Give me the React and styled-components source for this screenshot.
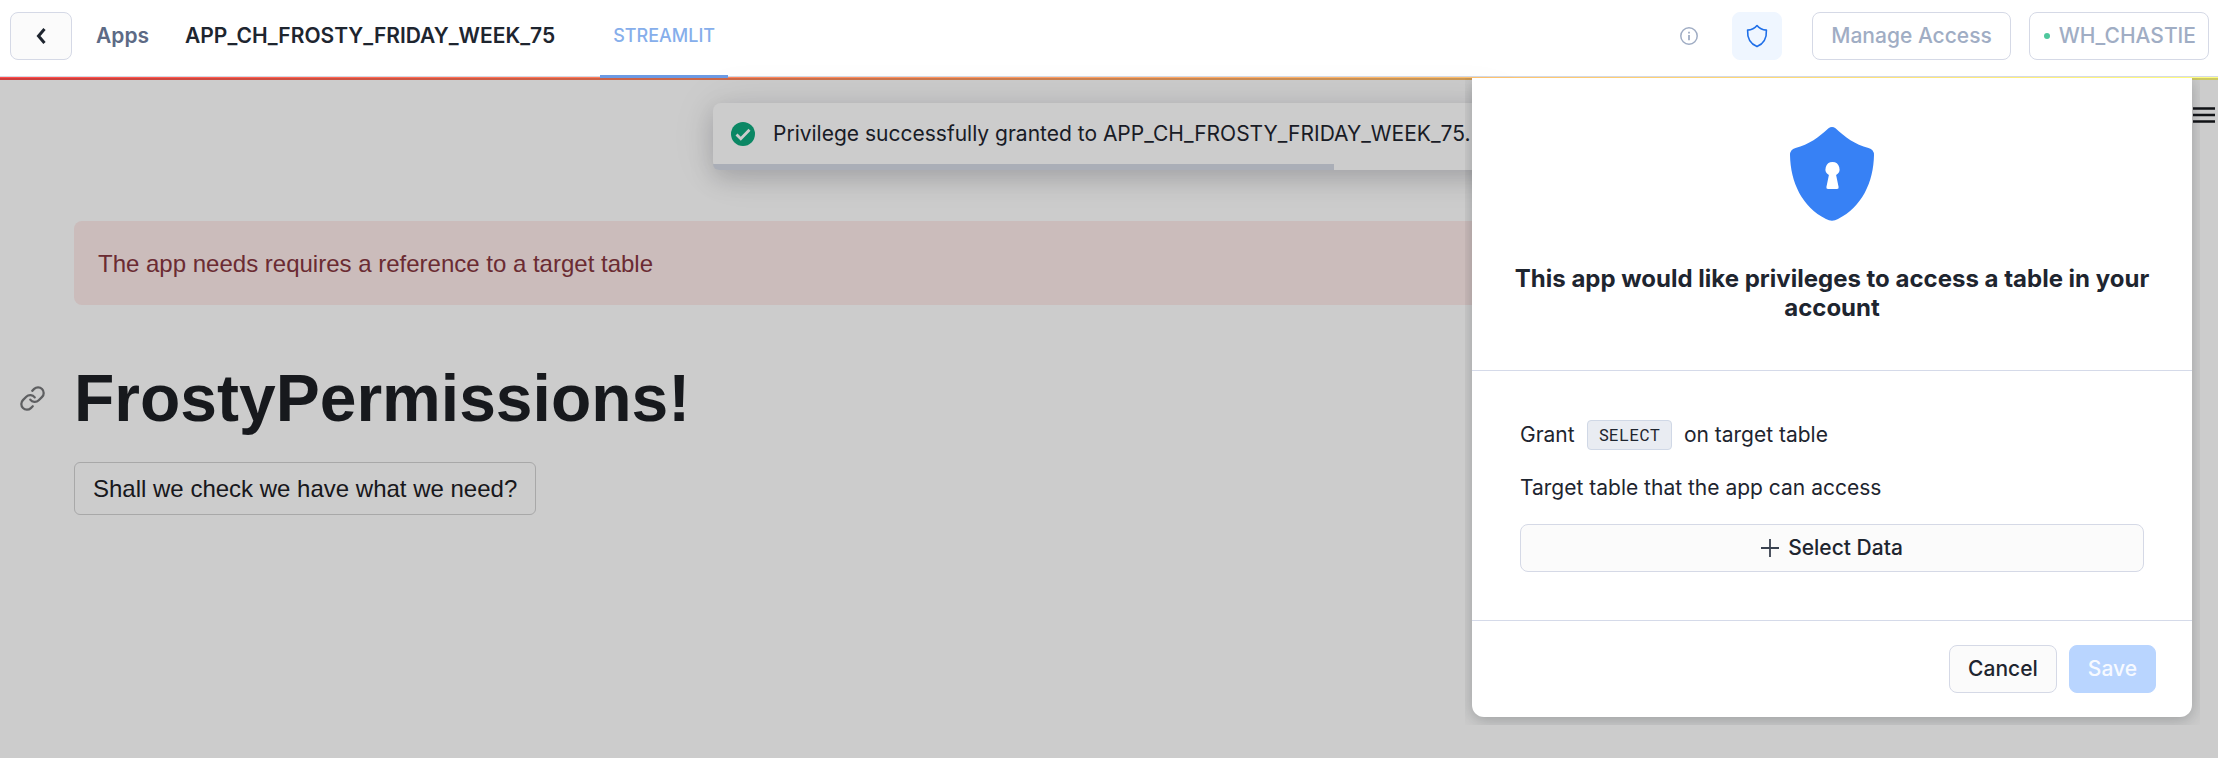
import React from "react";
import styled, { createGlobalStyle } from "styled-components";

const GlobalStyle = createGlobalStyle`
  *, *::before, *::after { box-sizing: border-box; }
  body { margin: 0; background: #ffffff; }
  button { font: inherit; cursor: pointer; }
  h1, h2, p { margin: 0; }
`;

const Page = styled.div`
  display: flex;
  flex-direction: column;
  min-height: 100vh;
  font-family: Inter, "Liberation Sans", sans-serif;
  font-size: 21px;
  line-height: 28px;
  color: #1e252f;
`;

const Header = styled.header`
  display: flex;
  align-items: stretch;
  height: 77px;
  padding: 0 9px 0 10px;
  border-bottom: 1px solid #d5dae4;
  background: #ffffff;
`;

const HeaderGroup = styled.div`
  display: flex;
  align-items: center;
  padding-bottom: 4px;
`;

const HeaderActions = styled(HeaderGroup)`
  margin-left: auto;
`;

const Breadcrumbs = styled.nav`
  display: flex;
  align-items: center;
  gap: 36px;
  margin-left: 24px;
  font-weight: 600;
  white-space: nowrap;
`;

const CrumbLink = styled.a`
  color: #5d6a85;
  text-decoration: none;
`;

const TabBar = styled.nav`
  display: flex;
  margin-left: 45px;
`;

const Tab = styled.a`
  position: relative;
  display: flex;
  align-items: center;
  justify-content: center;
  width: 128px;
  padding-bottom: 4px;
  font-size: 18px;
  font-weight: 500;
  color: #86aeeb;
  text-decoration: none;

  &::after {
    content: "";
    position: absolute;
    z-index: 3;
    left: 0;
    right: 0;
    bottom: -2px;
    height: 3px;
    background: #6c9ae4;
  }
`;

const Button = styled.button`
  display: inline-flex;
  align-items: center;
  justify-content: center;
  gap: 9px;
  height: 48px;
  width: ${(p) => p.$width || "auto"};
  padding: 0 18px;
  border: 1px solid ${(p) => (p.$primary ? "#b9d5ff" : "#d5d9e6")};
  border-radius: 8px;
  background: ${(p) => (p.$primary ? "#b9d5ff" : "#fbfbfb")};
  color: ${(p) => (p.$primary ? "#f7faff" : "#1e252f")};
  font-weight: 500;
  white-space: nowrap;
`;

const BackButton = styled(Button)`
  width: 62px;
  padding: 0;
`;

const FadedButton = styled(Button)`
  padding: ${(p) => (p.$compact ? "0 12px 0 14px" : "0 18px")};
  background: #ffffff;
  color: #a0adc4;

  & + & {
    margin-left: 18px;
  }
`;

const ShieldButton = styled(Button)`
  width: 50px;
  margin: 0 30px 0 34px;
  padding: 0;
  border-color: #eff6ff;
  background: #eff6ff;
`;

const InfoButton = styled.button`
  display: flex;
  padding: 0;
  border: 0;
  background: none;
`;

const StatusDot = styled.span`
  width: 6px;
  height: 6px;
  border-radius: 50%;
  background: #4fc79d;
`;

const Workspace = styled.div`
  position: relative;
  flex: 1;
  display: flex;
  flex-direction: column;
`;

const Decoration = styled.div`
  height: 3px;
  background: linear-gradient(90deg, #ff4b4b, #fffd80);
`;

const Content = styled.main`
  display: flex;
  flex-direction: column;
  align-items: flex-start;
  padding: 141px 74px 64px;
  font-family: "Liberation Sans", Arial, sans-serif;
  font-size: 24px;
  color: #1d2025;
`;

const Alert = styled.div`
  width: 100%;
  padding: 29px 24px 27px;
  border-radius: 8px;
  background: #feebea;
  color: #86363f;
`;

const TitleRow = styled.div`
  display: flex;
  align-items: center;
  gap: 28px;
  margin: 52px 0 23px -55px;
`;

const AppTitle = styled.h1`
  font-size: 66px;
  line-height: 82px;
  font-weight: 700;
`;

const AnchorLink = styled.a`
  display: flex;
  color: #76777a;
`;

const AppButton = styled.button`
  height: 53px;
  padding: 0 18px;
  border: 1px solid #d2d2d3;
  border-radius: 6px;
  background: #ffffff;
  color: inherit;
`;

const MenuButton = styled.button`
  position: absolute;
  top: 30px;
  right: 3px;
  display: flex;
  padding: 0;
  border: 0;
  background: none;
  color: #16181c;
`;

const Toast = styled.div`
  position: absolute;
  top: 26px;
  left: 50%;
  width: 792px;
  max-width: 100%;
  transform: translateX(-50%);
  border-radius: 8px;
  background: #ffffff;
  box-shadow: 0 8px 24px rgba(20, 24, 32, 0.18), 0 0 48px rgba(20, 24, 32, 0.08);
`;

const ToastBody = styled.div`
  display: flex;
  align-items: center;
  gap: 18px;
  height: 61px;
  padding: 0 18px;
  white-space: nowrap;
`;

const Progress = styled.div`
  width: 621px;
  height: 6px;
  border-bottom-left-radius: 8px;
  background: #d5dae5;
`;

const Scrim = styled.div`
  position: absolute;
  inset: 1px 0 0;
  background: rgba(0, 0, 0, 0.2);
`;

const PopoverClip = styled.div`
  position: absolute;
  top: 1px;
  right: 18px;
  width: 735px;
  max-width: 100%;
  padding: 0 8px 8px 7px;
  overflow: hidden;
`;

const Popover = styled.section`
  border-radius: 0 0 12px 12px;
  background: #ffffff;
  box-shadow: 0 3px 16px rgba(20, 28, 32, 0.26);
`;

const PopoverHead = styled.div`
  display: flex;
  flex-direction: column;
  align-items: center;
  gap: 43px;
  padding: 49px 40px 48px;
  border-bottom: 1px solid #d5dae9;
  text-align: center;
`;

const PopoverTitle = styled.h2`
  font-size: 24px;
  line-height: 29px;
  font-weight: 700;
`;

const PopoverBody = styled.div`
  padding: 49px 48px 48px;
`;

const GrantLine = styled.p`
  display: flex;
  align-items: center;
  gap: 12px;
  margin-bottom: 24px;
`;

const Code = styled.code`
  padding: 0 11px;
  border: 1px solid #d0d8e6;
  border-radius: 4px;
  background: #e9ecf2;
  font-family: "Roboto Mono", "Liberation Mono", monospace;
  font-size: 17px;
`;

const Description = styled.p`
  margin-bottom: 22px;
`;

const PopoverFoot = styled.div`
  display: flex;
  justify-content: flex-end;
  gap: 12px;
  padding: 24px 36px;
  border-top: 1px solid #d5dae9;
`;

const BackIcon = () => (
  <svg width="12" height="18" viewBox="0 0 12 18" fill="none" stroke="#1e252f" strokeWidth="3">
    <path d="M9.5 2 3.5 9l6 7" />
  </svg>
);

const InfoIcon = () => (
  <svg width="18" height="18" viewBox="0 0 18 18" fill="none" stroke="#a0adc4" strokeWidth="1.5">
    <circle cx="9" cy="9" r="8.2" />
    <path d="M9 8v5.2M9 4.8v1.8" strokeWidth="1.8" />
  </svg>
);

const ShieldOutline = () => (
  <svg width="22" height="24" viewBox="0 0 22 24" fill="none" stroke="#1f6fe8" strokeWidth="1.6">
    <path
      d="M11 1.5C8.8 4.2 5.7 5.8 1.6 6.1c-.4 7.2 2.6 13.6 9.4 16.5 6.8-2.9 9.8-9.3 9.4-16.5C16.3 5.8 13.2 4.2 11 1.5Z"
      strokeLinejoin="round"
    />
  </svg>
);

const ShieldLock = () => (
  <svg width="84" height="94" viewBox="0 0 84 94">
    <path
      d="M38.5 1.2Q42-1 45.5 1.2C55 10 65 17.500 78.5 21Q84 22.5 84 28C83.5 55 72 80 48 92Q42 95.5 36 92C12 80 .5 55 0 28Q0 22.5 5.5 21C19 17.5 29 10 38.5 1.2Z"
      fill="#3781f5"
    />
    <path d="M42.5 35a7 7 0 0 1 3.6 13l2.500 12q.4 2-1.6 2h-9q-2 0-1.6-2l2.5-12a7 7 0 0 1 3.6-13Z" fill="#fff" />
  </svg>
);

const CheckIcon = () => (
  <svg width="24" height="24" viewBox="0 0 24 24">
    <circle cx="12" cy="12" r="12" fill="#0ea97d" />
    <path d="m5.5 12.5 4.3 4.3 8.7-9" fill="none" stroke="#fff" strokeWidth="2.8" />
  </svg>
);

const LinkIcon = () => (
  <svg width="27" height="27" viewBox="0 0 24 24" fill="none" stroke="currentColor" strokeWidth="2" strokeLinecap="round">
    <path d="M10 13a5 5 0 0 0 7.54.54l3-3a5 5 0 0 0-7.07-7.07l-1.72 1.71" />
    <path d="M14 11a5 5 0 0 0-7.54-.54l-3 3a5 5 0 0 0 7.07 7.07l1.71-1.71" />
  </svg>
);

const MenuIcon = () => (
  <svg width="22" height="16" viewBox="0 0 22 16" stroke="currentColor" strokeWidth="2.6">
    <path d="M0 1.5h22M0 8h22M0 14.5h22" />
  </svg>
);

const PlusIcon = () => (
  <svg width="18" height="18" viewBox="0 0 18 18" stroke="#3a4250" strokeWidth="1.8">
    <path d="M9 0v18M0 9h18" />
  </svg>
);

export default function App() {
  return (
    <Page>
      <GlobalStyle />
      <Header>
        <HeaderGroup>
          <BackButton aria-label="Back"><BackIcon /></BackButton>
          <Breadcrumbs>
            <CrumbLink href="#apps">Apps</CrumbLink>
            <span>APP_CH_FROSTY_FRIDAY_WEEK_75</span>
          </Breadcrumbs>
        </HeaderGroup>
        <TabBar>
          <Tab href="#streamlit">STREAMLIT</Tab>
        </TabBar>
        <HeaderActions>
          <InfoButton aria-label="Info"><InfoIcon /></InfoButton>
          <ShieldButton aria-label="Privileges"><ShieldOutline /></ShieldButton>
          <FadedButton>Manage Access</FadedButton>
          <FadedButton $compact>
            <StatusDot />
            WH_CHASTIE
          </FadedButton>
        </HeaderActions>
      </Header>
      <Workspace>
        <Decoration />
        <Content>
          <Alert role="alert">The app needs requires a reference to a target table</Alert>
          <TitleRow>
            <AnchorLink href="#frostypermissions" aria-label="Link to heading"><LinkIcon /></AnchorLink>
            <AppTitle id="frostypermissions">FrostyPermissions!</AppTitle>
          </TitleRow>
          <AppButton>Shall we check we have what we need?</AppButton>
        </Content>
        <MenuButton aria-label="Menu"><MenuIcon /></MenuButton>
        <Toast role="status">
          <ToastBody>
            <CheckIcon />
            Privilege successfully granted to APP_CH_FROSTY_FRIDAY_WEEK_75.
          </ToastBody>
          <Progress />
        </Toast>
        <Scrim />
        <PopoverClip>
          <Popover role="dialog" aria-labelledby="privileges-title">
            <PopoverHead>
              <ShieldLock />
              <PopoverTitle id="privileges-title">
                This app would like privileges to access a table in your account
              </PopoverTitle>
            </PopoverHead>
            <PopoverBody>
              <GrantLine>
                Grant <Code>SELECT</Code> on target table
              </GrantLine>
              <Description>Target table that the app can access</Description>
              <Button $width="100%"><PlusIcon />Select Data</Button>
            </PopoverBody>
            <PopoverFoot>
              <Button>Cancel</Button>
              <Button $primary disabled>Save</Button>
            </PopoverFoot>
          </Popover>
        </PopoverClip>
      </Workspace>
    </Page>
  );
}
